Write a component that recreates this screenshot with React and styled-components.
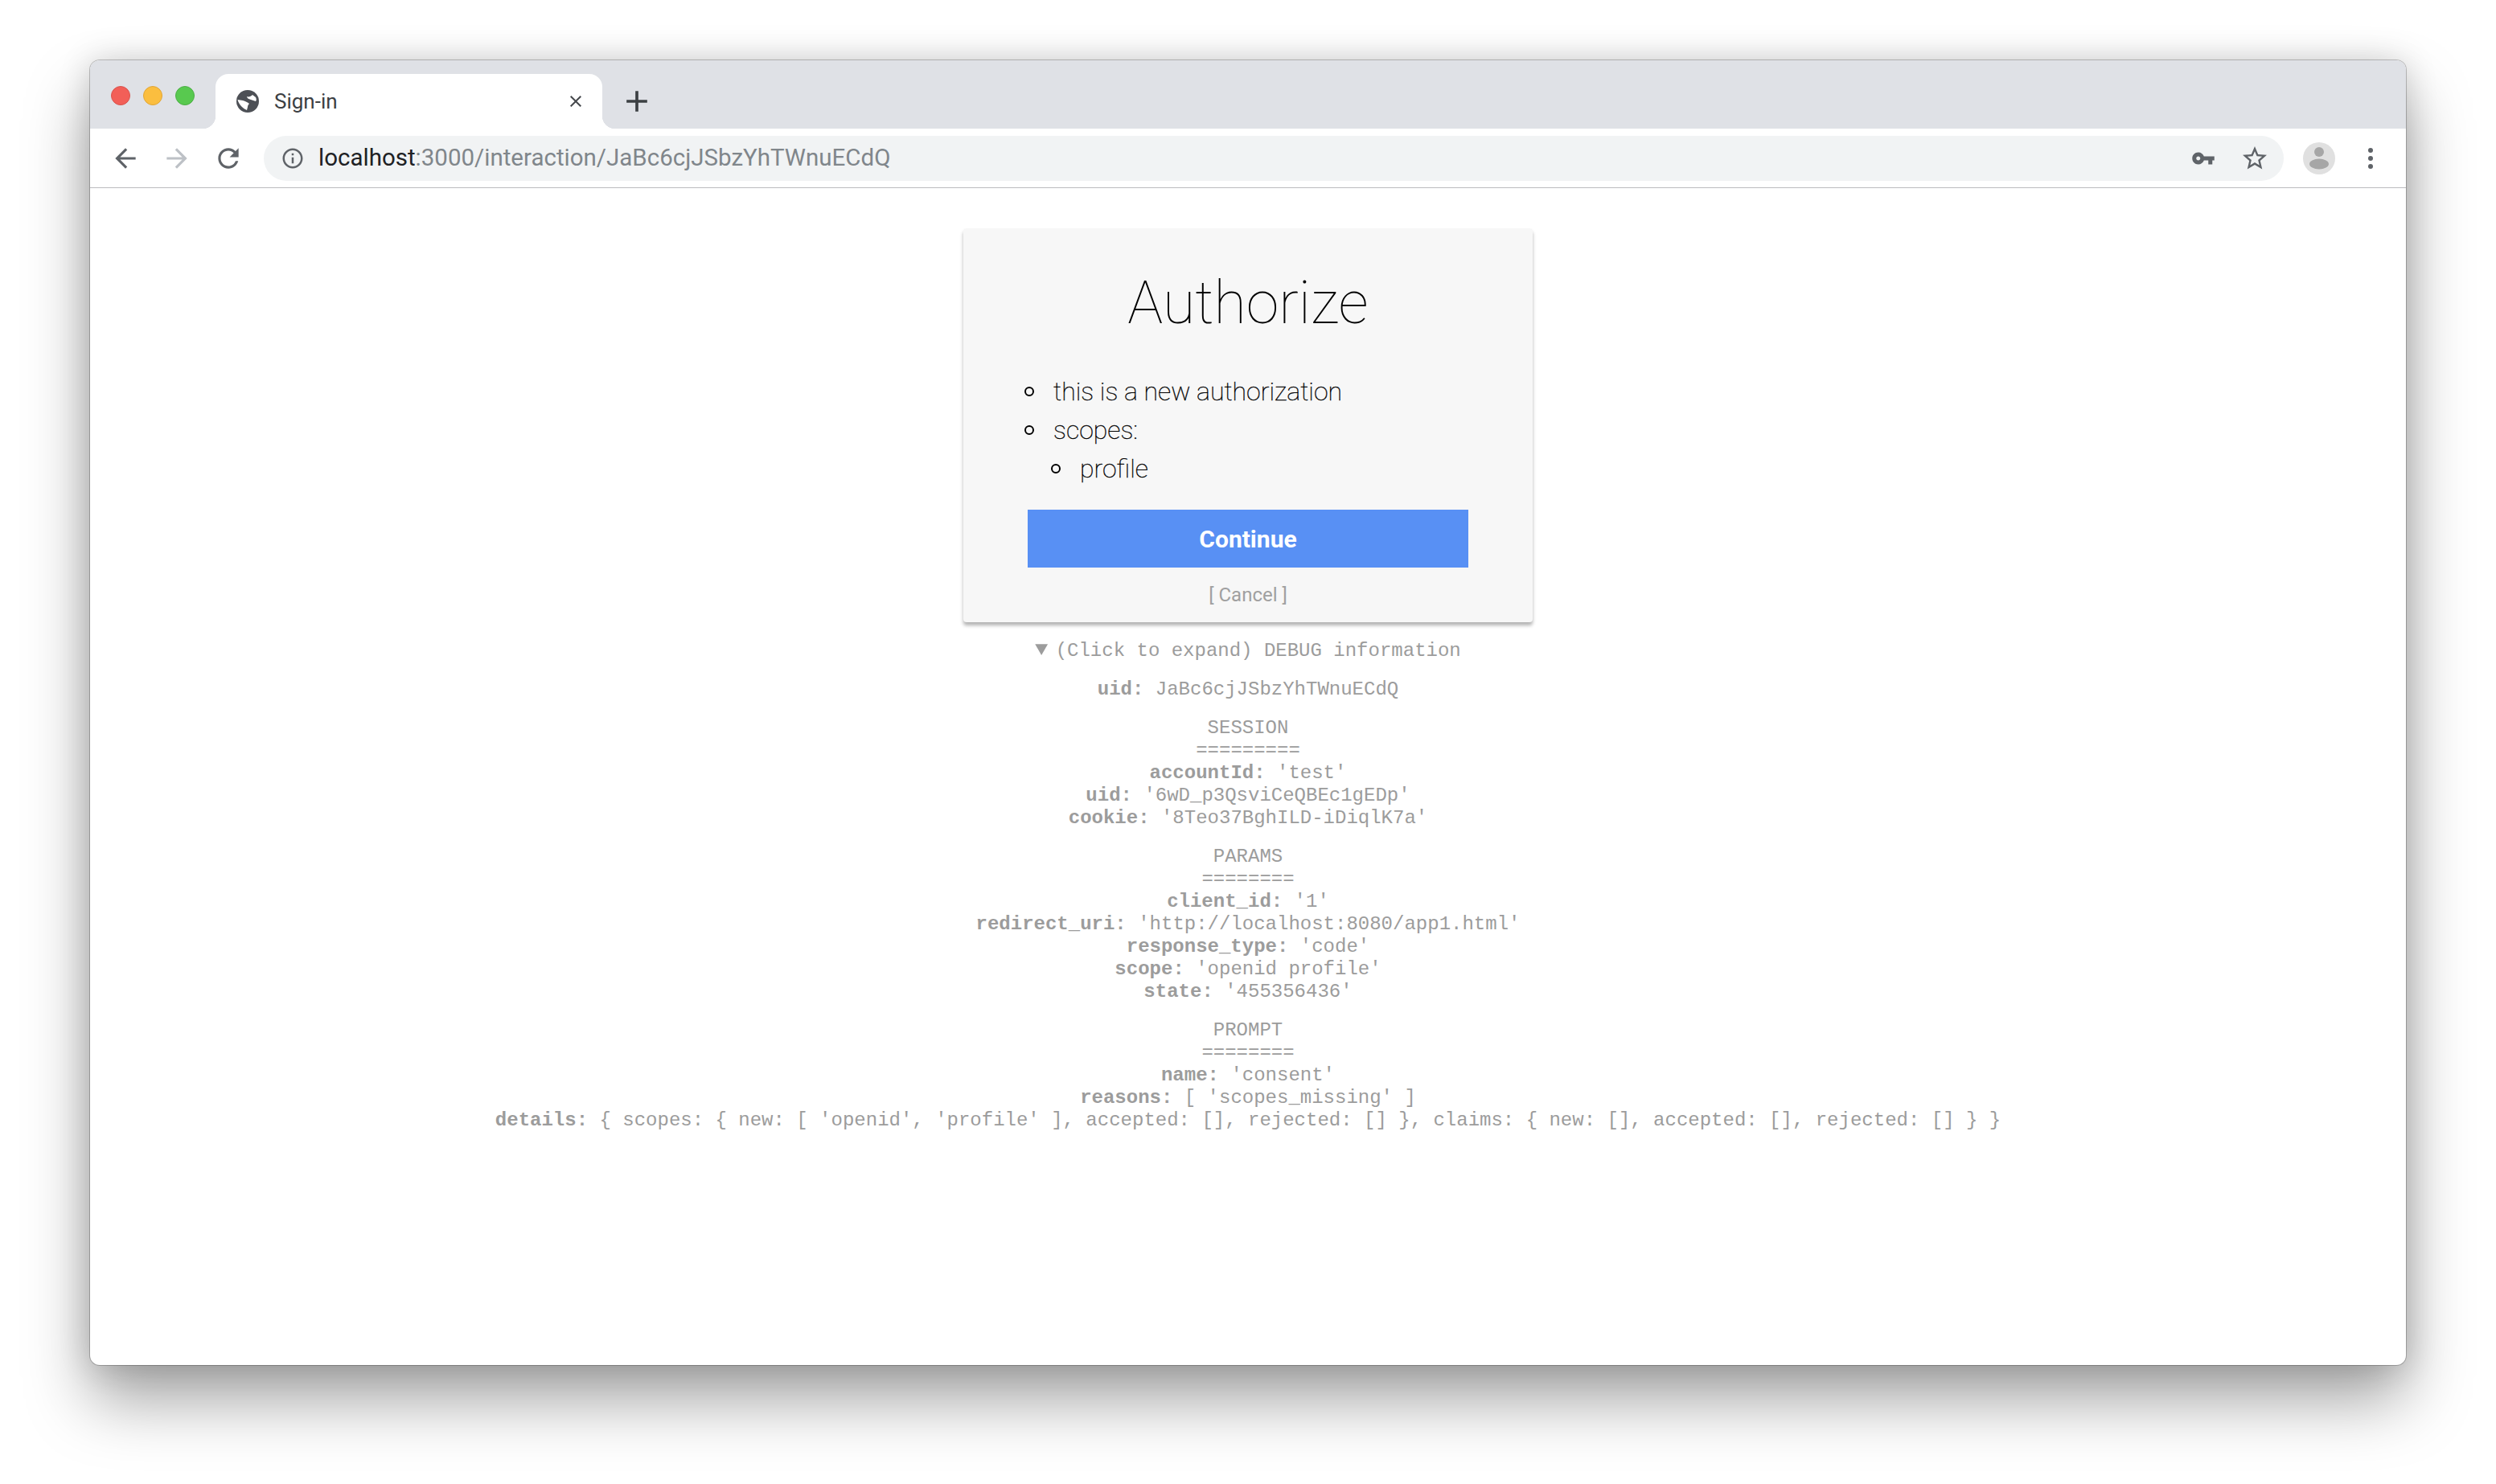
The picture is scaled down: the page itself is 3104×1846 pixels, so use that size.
import React from 'react';
import styled, { createGlobalStyle } from 'styled-components';

const GlobalStyle = createGlobalStyle`
  html, body {
    margin: 0;
    padding: 0;
    background: #fff;
  }
`;

const Stage = styled.div`
  width: 3104px;
  height: 1846px;
  overflow: hidden;
  padding: 75px 0 0 112px;
  box-sizing: border-box;
`;

const Browser = styled.div`
  width: 2880px;
  height: 1623px;
  display: flex;
  flex-direction: column;
  border-radius: 12px;
  overflow: hidden;
  background: #fff;
  box-shadow: 0 0 0 1px rgba(0, 0, 0, 0.22), 0 44px 80px rgba(0, 0, 0, 0.36), 0 0 40px rgba(0, 0, 0, 0.16);
`;

const TabStrip = styled.div`
  height: 85px;
  flex: none;
  display: flex;
  align-items: flex-end;
  background: #dfe1e6;
`;

const Lights = styled.div`
  align-self: flex-start;
  display: flex;
  gap: 16px;
  margin: 32px 26px 0 26px;
`;

const Light = styled.span`
  width: 24px;
  height: 24px;
  border-radius: 50%;
  box-sizing: border-box;
  background: ${(p) => p.$fill};
  border: 1px solid ${(p) => p.$edge};
`;

const Tab = styled.div`
  position: relative;
  width: 481px;
  height: 68px;
  box-sizing: border-box;
  display: flex;
  align-items: center;
  padding: 0 21px 0 26px;
  background: #fff;
  border-radius: 16px 16px 0 0;
  font-family: Roboto, "Liberation Sans", sans-serif;
  font-size: 26px;
  color: #3c4043;

  &::before,
  &::after {
    content: '';
    position: absolute;
    bottom: 0;
    width: 16px;
    height: 16px;
  }
  &::before {
    left: -16px;
    background: radial-gradient(circle at 0 0, transparent 16px, #fff 16.5px);
  }
  &::after {
    right: -16px;
    background: radial-gradient(circle at 100% 0, transparent 16px, #fff 16.5px);
  }
`;

const TabTitle = styled.span`
  margin-left: 19px;
  flex: 1;
`;

const NewTab = styled.div`
  align-self: flex-start;
  margin: 29px 0 0 21px;
  display: flex;
`;

const Toolbar = styled.div`
  height: 73px;
  flex: none;
  display: flex;
  align-items: center;
  padding: 0 41px 0 25px;
  background: #fff;
  border-bottom: 1px solid #bcbcbe;
`;

const NavButtons = styled.div`
  display: flex;
  align-items: center;
  gap: 26px;
`;

const AddressBar = styled.div`
  flex: 1;
  height: 56px;
  margin-left: 25px;
  display: flex;
  align-items: center;
  padding: 0 18px 0 21px;
  background: #f1f3f4;
  border-radius: 28px;
`;

const Url = styled.div`
  flex: 1;
  margin-left: 17px;
  margin-bottom: 1px;
  font-family: Roboto, "Liberation Sans", sans-serif;
  font-size: 29.5px;
  color: #80868b;
  white-space: nowrap;

  b {
    font-weight: 400;
    color: #202124;
  }
`;

const AddressActions = styled.div`
  display: flex;
  align-items: center;
  gap: 31px;
`;

const Avatar = styled.div`
  width: 40px;
  height: 40px;
  margin-left: 24px;
  display: flex;
`;

const MenuDots = styled.div`
  margin-left: 41px;
  display: flex;
  flex-direction: column;
  gap: 4px;

  span {
    width: 6px;
    height: 6px;
    border-radius: 50%;
    background: #5f6368;
  }
`;

const Glyph = styled.svg`
  flex: none;
  display: block;
  width: ${(p) => p.$size}px;
  height: ${(p) => p.$size}px;
  fill: ${(p) => p.$color || '#5f6368'};
`;

const Page = styled.main`
  flex: 1;
  display: flex;
  flex-direction: column;
  align-items: center;
  padding-top: 50px;
`;

const Card = styled.section`
  width: 708px;
  box-sizing: border-box;
  padding: 55px 80px 19px;
  background: #f7f7f7;
  border-radius: 4px;
  box-shadow: 0 4px 4px rgba(0, 0, 0, 0.3);
  font-family: Roboto, "Liberation Sans", sans-serif;
`;

const Title = styled.h1`
  margin: 0 0 48px;
  font-size: 73.6px;
  line-height: 76px;
  font-weight: 100;
  text-align: center;
  color: #000;
`;

const Notes = styled.ul`
  margin: 0;
  padding: 0 0 0 ${(p) => (p.$nested ? 33 : 32)}px;
  list-style: none;
  font-size: 32px;
  line-height: 48px;
  font-weight: 100;
  color: #000;
  -webkit-text-stroke: 0.35px #000;
`;

const Note = styled.li`
  position: relative;

  &::before {
    content: '';
    position: absolute;
    left: -36px;
    top: 18px;
    width: 12px;
    height: 12px;
    box-sizing: border-box;
    border: 2.5px solid #000;
    border-radius: 50%;
  }
`;

const SubmitButton = styled.button`
  display: block;
  width: 548px;
  height: 72px;
  margin-top: 27px;
  padding: 0;
  border: 0;
  background: #5890f4;
  color: #fff;
  font-family: Roboto, "Liberation Sans", sans-serif;
  font-size: 30px;
  font-weight: 700;
  text-align: center;
`;

const CancelLink = styled.a`
  display: block;
  margin-top: 19px;
  line-height: 30px;
  font-size: 24px;
  color: #a0a0a0;
  text-align: center;
`;

const Debug = styled.details`
  margin-top: 22px;
  font-family: "Liberation Mono", "Courier New", monospace;
  font-size: 24px;
  line-height: 28px;
  color: #9c9c9c;
  text-align: center;

  summary {
    cursor: pointer;
  }
`;

const Block = styled.div`
  margin-top: 20px;
  white-space: pre;

  strong {
    font-weight: 700;
  }
`;

const Row = ({ name, children }) => (
  <div>
    <strong>{name}:</strong> {children}
  </div>
);

const PATHS = {
  close: 'M19 6.41 17.59 5 12 10.59 6.41 5 5 6.41 10.59 12 5 17.59 6.41 19 12 13.41 17.59 19 19 17.59 13.41 12z',
  plus: 'M19 13h-6v6h-2v-6H5v-2h6V5h2v6h6v2z',
  back: 'M20 11H7.83l5.59-5.59L12 4l-8 8 8 8 1.41-1.41L7.83 13H20v-2z',
  forward: 'M4 11h12.17l-5.59-5.59L12 4l8 8-8 8-1.41-1.41L16.17 13H4v-2z',
  reload: 'M17.65 6.35C16.2 4.9 14.21 4 12 4c-4.42 0-7.99 3.58-7.99 8s3.57 8 7.99 8c3.73 0 6.84-2.55 7.73-6h-2.08c-.82 2.33-3.04 4-5.65 4-3.31 0-6-2.69-6-6s2.69-6 6-6c1.66 0 3.14.69 4.22 1.78L13 11h7V4l-2.35 2.35z',
  info: 'M11 7h2v2h-2zm0 4h2v6h-2zm1-9C6.48 2 2 6.48 2 12s4.48 10 10 10 10-4.48 10-10S17.52 2 12 2zm0 18c-4.41 0-8-3.59-8-8s3.59-8 8-8 8 3.59 8 8-3.59 8-8 8z',
  key: 'M12.65 10C11.83 7.67 9.61 6 7 6c-3.31 0-6 2.69-6 6s2.69 6 6 6c2.61 0 4.83-1.67 5.65-4H17v4h4v-4h2v-4H12.65zM7 14c-1.1 0-2-.9-2-2s.9-2 2-2 2 .9 2 2-.9 2-2 2z',
  star: 'M22 9.24l-7.19-.62L12 2 9.19 8.63 2 9.24l5.46 4.73L5.82 21 12 17.27 18.18 21l-1.63-7.03L22 9.24zM12 15.4l-3.76 2.27 1-4.28-3.32-2.88 4.38-.38L12 6.1l1.71 4.04 4.38.38-3.32 2.88 1 4.28L12 15.4z',
};

const Icon = ({ name, size, color }) => (
  <Glyph viewBox="0 0 24 24" $size={size} $color={color}>
    <path d={PATHS[name]} />
  </Glyph>
);

// the tab's favicon: a solid disc with the land cut out in white
const Globe = () => (
  <Glyph viewBox="0 0 28 28" $size={28} $color="#4d5056">
    <circle cx="14" cy="14" r="14" />
    <path
      fill="#fff"
      d="M13 8c2 1 5 0 7-2l4 3c1 2 1 4 0 5l-6-2c-3-1-5-2-5-4zM1.5 12 8 13c3 1 6 2 8 4-1 1-2 2-2 4l-1 4c-5-2-10-7-11.5-13z"
    />
  </Glyph>
);

export default function App() {
  return (
    <Stage>
      <GlobalStyle />
      <Browser>
        <TabStrip>
          <Lights>
            <Light $fill="#f25f58" $edge="#d9534d" />
            <Light $fill="#fbbe3f" $edge="#e0a537" />
            <Light $fill="#58c94f" $edge="#4cae45" />
          </Lights>
          <Tab>
            <Globe />
            <TabTitle>Sign-in</TabTitle>
            <Icon name="close" size={24} color="#45484c" />
          </Tab>
          <NewTab>
            <Icon name="plus" size={44} color="#3c4043" />
          </NewTab>
        </TabStrip>

        <Toolbar>
          <NavButtons>
            <Icon name="back" size={38} />
            <Icon name="forward" size={38} color="#bdc1c6" />
            <Icon name="reload" size={38} />
          </NavButtons>
          <AddressBar>
            <Icon name="info" size={30} />
            <Url>
              <b>localhost</b>:3000/interaction/JaBc6cjJSbzYhTWnuECdQ
            </Url>
            <AddressActions>
              <Icon name="key" size={30} />
              <Icon name="star" size={36} />
            </AddressActions>
          </AddressBar>
          <Avatar>
            <svg viewBox="0 0 40 40" width="40" height="40">
              <circle cx="20" cy="20" r="20" fill="#e0e0e0" />
              <circle cx="20" cy="12" r="6" fill="#a6a6a6" />
              <ellipse cx="20" cy="27" rx="12" ry="6.5" fill="#a6a6a6" />
            </svg>
          </Avatar>
          <MenuDots>
            <span />
            <span />
            <span />
          </MenuDots>
        </Toolbar>

        <Page>
          <Card>
            <Title>Authorize</Title>
            <Notes>
              <Note>this is a new authorization</Note>
              <Note>scopes:</Note>
              <Notes $nested>
                <Note>profile</Note>
              </Notes>
            </Notes>
            <SubmitButton>Continue</SubmitButton>
            <CancelLink>[ Cancel ]</CancelLink>
          </Card>

          <Debug open>
            <summary>(Click to expand) DEBUG information</summary>
            <Block>
              <Row name="uid">JaBc6cjJSbzYhTWnuECdQ</Row>
            </Block>
            <Block>
              <div>SESSION</div>
              <div>=========</div>
              <Row name="accountId">'test'</Row>
              <Row name="uid">'6wD_p3QsviCeQBEc1gEDp'</Row>
              <Row name="cookie">'8Teo37BghILD-iDiqlK7a'</Row>
            </Block>
            <Block>
              <div>PARAMS</div>
              <div>========</div>
              <Row name="client_id">'1'</Row>
              <Row name="redirect_uri">'http://localhost:8080/app1.html'</Row>
              <Row name="response_type">'code'</Row>
              <Row name="scope">'openid profile'</Row>
              <Row name="state">'455356436'</Row>
            </Block>
            <Block>
              <div>PROMPT</div>
              <div>========</div>
              <Row name="name">'consent'</Row>
              <Row name="reasons">[ 'scopes_missing' ]</Row>
              <Row name="details">
                {"{ scopes: { new: [ 'openid', 'profile' ], accepted: [], rejected: [] }, claims: { new: [], accepted: [], rejected: [] } }"}
              </Row>
            </Block>
          </Debug>
        </Page>
      </Browser>
    </Stage>
  );
}
